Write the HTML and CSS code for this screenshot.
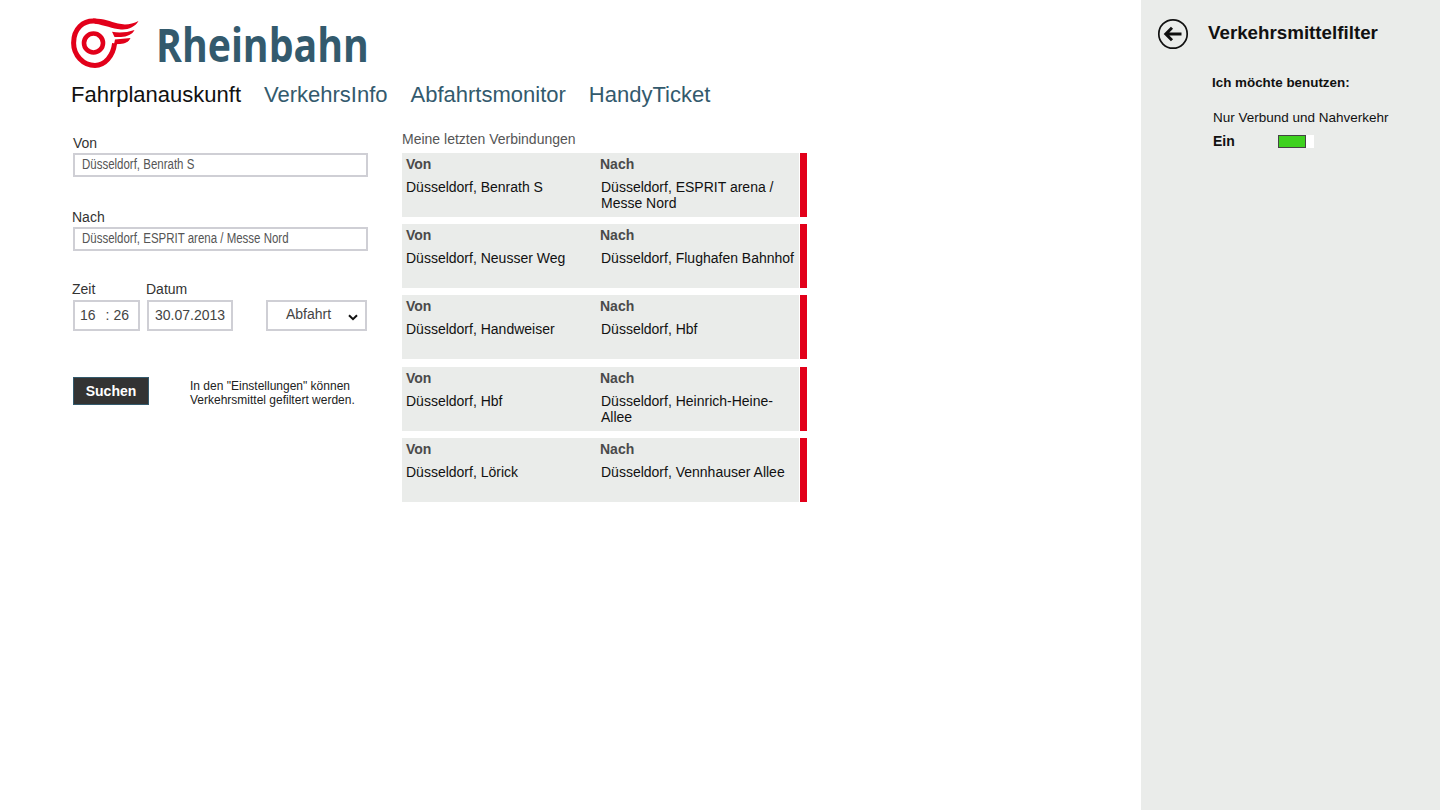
FILE: index.html
```html
<!DOCTYPE html>
<html lang="de">
<head>
    <meta charset="UTF-8">
    <meta name="viewport" content="width=device-width, initial-scale=1.0">
    <title>Rheinbahn Fahrplanauskunft</title>
    <link rel="stylesheet" href="styles.css">
</head>
<body>
    <div class="app">
        <div class="main">
            <div class="logo">
                <svg class="logo-mark" width="70" height="52" viewBox="0 0 70 52">
                    <circle cx="22.5" cy="25" r="9.5" fill="none" stroke="#e2001a" stroke-width="4.6"/>
                    <path d="M25 3.2C12 1.8 2.6 11 2.6 25C2.6 37 12 47.4 24 47.4C34 47.4 42 38 43.6 25.4" fill="none" stroke="#e2001a" stroke-width="5"/>
                    <path d="M22 .6C32 .3 39 3.6 47 5.6C54 7.2 61 6.4 67.5 3C64 9 57 12 50 11.4C41 10.8 34 7.2 24 5.8Z" fill="#e2001a"/>
                    <path d="M41 13.8C48 15.2 56 14.6 63.5 12C61.5 16.4 56 18.8 50 19L43.5 19Z" fill="#e2001a"/>
                    <path d="M44 21.4L59.5 20C58 23.6 54 25.8 49 26L43 26.2Z" fill="#e2001a"/>
                </svg>
                <span class="logo-text">Rheinbahn</span>
            </div>
            <nav class="nav">
                <a class="nav-item active">Fahrplanauskunft</a>
                <a class="nav-item">VerkehrsInfo</a>
                <a class="nav-item">Abfahrtsmonitor</a>
                <a class="nav-item">HandyTicket</a>
            </nav>
            <div class="content">
                <div class="form">
                    <label class="label">Von</label>
                    <div class="input"><span>Düsseldorf, Benrath S</span></div>
                    <label class="label label-next">Nach</label>
                    <div class="input"><span>Düsseldorf, ESPRIT arena / Messe Nord</span></div>
                    <div class="when">
                        <div class="field">
                            <label class="label">Zeit</label>
                            <div class="box time"><span>16</span><span class="colon">:</span><span>26</span></div>
                        </div>
                        <div class="field">
                            <label class="label">Datum</label>
                            <div class="box date">30.07.2013</div>
                        </div>
                        <div class="box select">
                            <span>Abfahrt</span>
                            <svg width="10" height="7" viewBox="0 0 10 7"><path d="M1 1.2L5 5.2L9 1.2" fill="none" stroke="#111" stroke-width="2"/></svg>
                        </div>
                    </div>
                    <div class="search">
                        <button class="btn">Suchen</button>
                        <p class="hint">In den "Einstellungen" können Verkehrsmittel gefiltert werden.</p>
                    </div>
                </div>
                <div class="recent">
                    <h2 class="recent-title">Meine letzten Verbindungen</h2>
                    <div class="conn">
                        <div class="conn-body">
                            <div class="col-from"><b>Von</b><span>Düsseldorf, Benrath S</span></div>
                            <div class="col-to"><b>Nach</b><span>Düsseldorf, ESPRIT arena / Messe Nord</span></div>
                        </div>
                        <div class="conn-bar"></div>
                    </div>
                    <div class="conn">
                        <div class="conn-body">
                            <div class="col-from"><b>Von</b><span>Düsseldorf, Neusser Weg</span></div>
                            <div class="col-to"><b>Nach</b><span>Düsseldorf, Flughafen Bahnhof</span></div>
                        </div>
                        <div class="conn-bar"></div>
                    </div>
                    <div class="conn">
                        <div class="conn-body">
                            <div class="col-from"><b>Von</b><span>Düsseldorf, Handweiser</span></div>
                            <div class="col-to"><b>Nach</b><span>Düsseldorf, Hbf</span></div>
                        </div>
                        <div class="conn-bar"></div>
                    </div>
                    <div class="conn">
                        <div class="conn-body">
                            <div class="col-from"><b>Von</b><span>Düsseldorf, Hbf</span></div>
                            <div class="col-to"><b>Nach</b><span>Düsseldorf, Heinrich-Heine-Allee</span></div>
                        </div>
                        <div class="conn-bar"></div>
                    </div>
                    <div class="conn">
                        <div class="conn-body">
                            <div class="col-from"><b>Von</b><span>Düsseldorf, Lörick</span></div>
                            <div class="col-to"><b>Nach</b><span>Düsseldorf, Vennhauser Allee</span></div>
                        </div>
                        <div class="conn-bar"></div>
                    </div>
                </div>
            </div>
        </div>
        <aside class="panel">
            <div class="panel-head">
                <svg width="32" height="32" viewBox="0 0 32 32">
                    <circle cx="16" cy="16" r="14.2" fill="none" stroke="#111" stroke-width="1.7"/>
                    <path d="M24.5 16H9M15 9.8L8.8 16L15 22.2" fill="none" stroke="#111" stroke-width="3"/>
                </svg>
                <h2 class="panel-title">Verkehrsmittelfilter</h2>
            </div>
            <div class="panel-body">
                <p class="panel-sub">Ich möchte benutzen:</p>
                <p class="panel-text">Nur Verbund und Nahverkehr</p>
                <div class="toggle-row">
                    <b>Ein</b>
                    <div class="toggle"><div class="toggle-on"></div></div>
                </div>
            </div>
        </aside>
    </div>
</body>
</html>
```
FILE: styles.css
```css
body {
    font-family: "Liberation Sans", Arial, sans-serif;
    margin: 0;
    background-color: white;
    color: #111;
}
.app {
    display: flex;
    height: 810px;
    overflow: hidden;
}
.main {
    flex: 1;
    padding: 18px 0 0 71px;
}
.logo {
    display: flex;
    align-items: flex-start;
    height: 54px;
}
.logo-text {
    margin-left: 15px;
    margin-top: -1px;
    font-family: "Open Sans", sans-serif;
    font-size: 47px;
    line-height: 54px;
    font-weight: 700;
    color: #335a6d;
    display: inline-block;
    transform: scaleX(0.835);
    transform-origin: left center;
}
.nav {
    display: flex;
    gap: 23px;
    margin-top: 9px;
}
.nav-item {
    font-size: 22px;
    line-height: 28px;
    color: #335a6d;
}
.nav-item.active {
    color: #111;
}
.content {
    display: flex;
    margin-top: 23px;
}
.form {
    width: 295px;
    margin-left: 2px;
}
.label {
    display: block;
    font-size: 14px;
    line-height: 16px;
    color: #333;
    margin-top: 3px;
    margin-bottom: 2px;
}
.label-next {
    margin-top: 32px;
    margin-left: -1px;
}
.input {
    height: 20px;
    border: 2px solid #cfcfd5;
    padding-left: 7px;
    font-size: 14px;
    line-height: 19px;
    color: #555;
}
.input span {
    display: inline-block;
    white-space: nowrap;
    transform: scaleX(0.82);
    transform-origin: left center;
}
.when {
    display: flex;
    align-items: flex-end;
    margin-top: 27px;
}
.when .label {
    margin-left: -1px;
    margin-bottom: 3px;
}
.field {
    margin-right: 7px;
}
.box {
    height: 27px;
    border: 2px solid #cfcfd5;
    font-size: 14px;
    line-height: 26px;
    color: #444;
    box-sizing: content-box;
}
.time {
    display: flex;
    padding-left: 5px;
    box-sizing: border-box;
    width: 67px;
    height: 31px;
}
.colon {
    margin: 0 4px 0 10px;
}
.date {
    width: 82px;
    text-align: center;
}
.select {
    width: 97px;
    margin-left: 26px;
    display: flex;
    align-items: center;
    justify-content: space-between;
    line-height: 24px;
}
.select span {
    margin-left: 18px;
    margin-bottom: 4px;
}
.select svg {
    margin-right: 7px;
    margin-top: 4px;
}
.search {
    display: flex;
    margin-top: 46px;
}
.btn {
    width: 76px;
    height: 28px;
    padding: 0;
    background-color: #333;
    border: 1px solid #335a6d;
    color: white;
    font-family: inherit;
    font-size: 14px;
    font-weight: bold;
}
.hint {
    margin: 2px 0 0 41px;
    width: 170px;
    font-size: 12px;
    line-height: 14px;
    color: #222;
}
.recent {
    width: 405px;
    margin-left: 34px;
}
.recent-title {
    margin: 0;
    font-size: 14px;
    line-height: 16px;
    font-weight: normal;
    color: #555;
    padding-bottom: 6px;
    margin-top: -1px;
}
.conn {
    display: flex;
    height: 64px;
    margin-bottom: 7.2px;
}
.conn-body {
    flex: 1;
    display: flex;
    background-color: #eaecea;
    margin-right: 1px;
    padding: 3px 4px 0 4px;
    font-size: 14px;
}
.conn-bar {
    width: 7px;
    background-color: #e2001a;
}
.col-from {
    width: 195px;
}
.col-to {
    flex: 1;
}
.col-to b {
    margin-left: -1px;
}
.conn b {
    display: block;
    color: #4a4a4a;
    line-height: 16px;
    margin-bottom: 7px;
}
.conn span {
    display: block;
    line-height: 16px;
    color: #111;
}
.panel {
    width: 299px;
    background-color: #eaecea;
    padding: 18px 0 0 16px;
    box-sizing: border-box;
}
.panel-head {
    display: flex;
    align-items: flex-start;
}
.panel-title {
    margin: 4px 0 0 19px;
    font-size: 18.75px;
    line-height: 22px;
    color: #111;
}
.panel-body {
    padding-left: 55px;
}
.panel-sub {
    margin: 25px 0 0;
    font-size: 13.4px;
    line-height: 16px;
    font-weight: bold;
}
.panel-text {
    margin: 19px 0 0 1px;
    font-size: 13.5px;
    line-height: 16px;
}
.toggle-row {
    display: flex;
    align-items: center;
    margin: 7px 0 0 1px;
    font-size: 14px;
    line-height: 16px;
}
.toggle {
    width: 36px;
    height: 13px;
    margin-left: 43px;
    background-color: white;
}
.toggle-on {
    width: 26px;
    height: 11px;
    background-color: #3ed11f;
    border: 1px solid #444;
}
```
